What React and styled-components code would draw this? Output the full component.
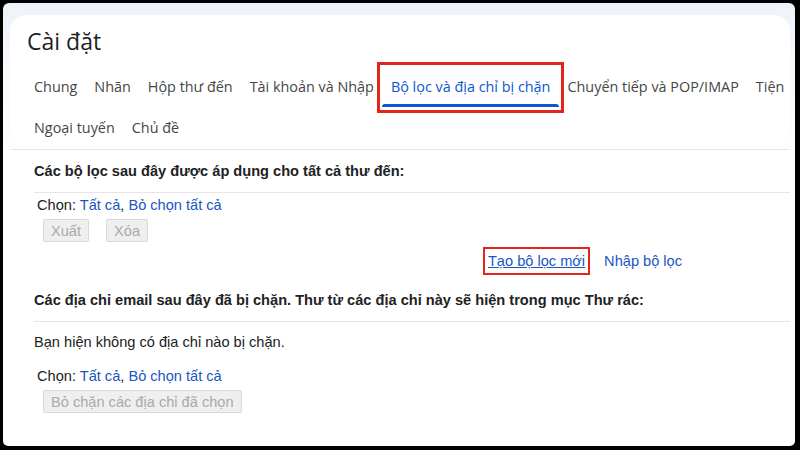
import React from "react";
import styled, { createGlobalStyle } from "styled-components";

const Global = createGlobalStyle`
  html, body { margin: 0; padding: 0; background: #000; }
  #root { width: 800px; height: 450px; }
`;

const Frame = styled.div`
  width: 800px;
  height: 450px;
  box-sizing: border-box;
  padding: 3px 5px 4px 3px;
  background: #000;
  display: flex;
`;

const Window = styled.div`
  flex: 1;
  display: flex;
  flex-direction: column;
  background: linear-gradient(#eef2f9 0px, #f6f8fc 60px, #ffffff 160px);
  border-radius: 6px 6px 5px 5px;
  overflow: hidden;
`;

const Card = styled.div`
  flex: 1;
  margin: 12px 5px 0 7px;
  background: #fff;
  border-radius: 16px 16px 0 0;
  overflow: hidden;
  display: flex;
  flex-direction: column;
`;

const Title = styled.h1`
  margin: 0;
  padding: 10px 0 10px 17px;
  font-family: "Open Sans", Roboto, sans-serif;
  font-weight: 400;
  font-size: 23px;
  line-height: 32px;
  color: #1f1f1f;
`;

const TabBar = styled.nav`
  padding-left: 15.5px;
  border-bottom: 1px solid #e6e6e6;
  display: flex;
  flex-direction: column;
`;

const TabRow = styled.div`
  display: flex;
  flex-wrap: nowrap;
  white-space: nowrap;
`;

const Tab = styled.div`
  position: relative;
  padding: 0 8.5px;
  height: 41px;
  line-height: 40px;
  font-family: "Open Sans", Roboto, sans-serif;
  font-size: 14.4px;
  color: ${(p) => (p.$active ? "#0b57d0" : "#444746")};
  outline: ${(p) => (p.$marked ? "3px solid #e3261c" : "none")};
  outline-offset: 2px;
  &::after {
    content: "";
    display: ${(p) => (p.$active ? "block" : "none")};
    position: absolute;
    left: 0;
    right: 0;
    bottom: 1px;
    height: 3px;
    border-radius: 3px 3px 0 0;
    background: #0b57d0;
  }
`;

const Section = styled.section`
  padding-left: 24px;
  font-family: "Liberation Sans", Arial, sans-serif;
  font-size: 14.6px;
  color: #222;
`;

const Heading = styled.div`
  padding: 12px 0;
  margin-top: ${(p) => p.$top || 0}px;
  line-height: 18px;
  font-weight: 700;
  border-bottom: 1px solid #e6e6e6;
  white-space: nowrap;
`;

const Line = styled.div`
  line-height: 18px;
  padding-left: ${(p) => p.$indent || 0}px;
  margin-top: ${(p) => p.$top || 0}px;
`;

const Link = styled.a`
  color: #1a56c2;
  text-decoration: ${(p) => (p.$underline ? "underline" : "none")};
  cursor: pointer;
  outline: ${(p) => (p.$marked ? "2px solid #e3261c" : "none")};
  outline-offset: 3px;
`;

const ButtonRow = styled.div`
  display: flex;
  gap: 17px;
  padding-left: 9px;
  margin-top: ${(p) => p.$top || 0}px;
`;

const Button = styled.button`
  height: 23px;
  padding: 0 7px;
  font-family: "Liberation Sans", Arial, sans-serif;
  font-size: 14.6px;
  color: #aaa;
  background: #efefef;
  border: 1px solid #d8d8d8;
  border-radius: 2px;
`;

const ActionRow = styled.div`
  display: flex;
  justify-content: flex-end;
  gap: 19px;
  padding-right: 108px;
  margin-top: 10px;
  line-height: 18px;
`;

const SelectLine = ({ top }) => (
  <Line $indent={3} $top={top}>
    Chọn: <Link>Tất cả</Link>, <Link>Bỏ chọn tất cả</Link>
  </Line>
);

const ACTIVE = "Bộ lọc và địa chỉ bị chặn";
const tabsRow1 = [
  "Chung",
  "Nhãn",
  "Hộp thư đến",
  "Tài khoản và Nhập",
  ACTIVE,
  "Chuyển tiếp và POP/IMAP",
  "Tiện",
];
const tabsRow2 = ["Ngoại tuyến", "Chủ đề"];

export default function App() {
  return (
    <>
      <Global />
      <Frame>
        <Window>
          <Card>
            <Title>Cài đặt</Title>
            <TabBar>
              <TabRow>
                {tabsRow1.map((t) => (
                  <Tab key={t} $active={t === ACTIVE} $marked={t === ACTIVE}>
                    {t}
                  </Tab>
                ))}
              </TabRow>
              <TabRow>
                {tabsRow2.map((t) => (
                  <Tab key={t}>{t}</Tab>
                ))}
              </TabRow>
            </TabBar>
            <Section>
              <Heading>Các bộ lọc sau đây được áp dụng cho tất cả thư đến:</Heading>
              <SelectLine top={3} />
              <ButtonRow $top={5}>
                <Button disabled>Xuất</Button>
                <Button disabled>Xóa</Button>
              </ButtonRow>
              <ActionRow>
                <Link $underline $marked>Tạo bộ lọc mới</Link>
                <Link>Nhập bộ lọc</Link>
              </ActionRow>
              <Heading $top={9}>
                Các địa chỉ email sau đây đã bị chặn. Thư từ các địa chỉ này sẽ hiện trong mục Thư rác:
              </Heading>
              <Line $top={11}>Bạn hiện không có địa chỉ nào bị chặn.</Line>
              <SelectLine top={16} />
              <ButtonRow $top={5}>
                <Button disabled>Bỏ chặn các địa chỉ đã chọn</Button>
              </ButtonRow>
            </Section>
          </Card>
        </Window>
      </Frame>
    </>
  );
}
